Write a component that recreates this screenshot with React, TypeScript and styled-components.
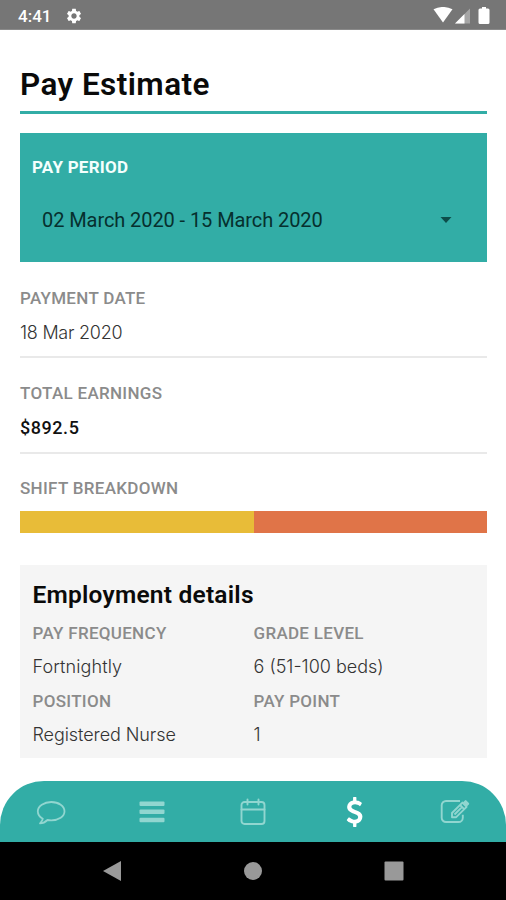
import React from "react";
import styled, { createGlobalStyle, css } from "styled-components";

const TEAL = "#32ada6";

const GlobalStyle = createGlobalStyle`
  * { box-sizing: border-box; }
  body { margin: 0; background: #fff; font-family: Roboto, sans-serif; color: #0a0a0a; }
`;

const Screen = styled.div`
  width: 506px;
  height: 900px;
  display: flex;
  flex-direction: column;
  overflow: hidden;
  background: #fff;
  white-space: nowrap;
`;

const StatusBar = styled.header`
  flex: none;
  height: 30px;
  display: flex;
  align-items: center;
  padding: 2px 15px 0 18px;
  background: #767676;
  border-bottom: 1px solid #8a8a8a;
  color: #fff;
  svg { display: block; }
`;

const Clock = styled.time`
  width: 47px;
  font-size: 17px;
  font-weight: 500;
  line-height: 20px;
`;

const StatusIcons = styled.div`
  margin-left: auto;
  display: flex;
  align-items: center;
`;

const Content = styled.main`
  flex: 1;
  padding: 0 19px 0 20px;
`;

const Title = styled.h1`
  margin: 0;
  height: 84px;
  padding-top: 37px;
  font-size: 31.5px;
  font-weight: 600;
  line-height: 36px;
  letter-spacing: 0.43px;
  border-bottom: 3px solid ${TEAL};
`;

const PeriodCard = styled.section`
  margin-top: 18.5px;
  height: 129.5px;
  padding: 23px 35px 0 12px;
  background: ${TEAL};
`;

const Label = styled.div<{ $light?: boolean }>`
  font-size: 17px;
  font-weight: ${(p) => (p.$light ? 700 : 500)};
  line-height: 22px;
  letter-spacing: ${(p) => (p.$light ? "0.25px" : "0.3px")};
  color: ${(p) => (p.$light ? "#f4fffd" : "#8b8b8b")};
`;

const PeriodSelect = styled.div`
  display: flex;
  align-items: center;
  justify-content: space-between;
  margin-top: 30px;
  padding-left: 10px;
  font-size: 20px;
  line-height: 24px;
  letter-spacing: -0.08px;
  color: #06302e;
`;

const Value = styled.div<{ $spacing?: number; $strong?: boolean }>`
  font-family: Inter, sans-serif;
  font-weight: 300;
  font-size: 18px;
  line-height: 24px;
  color: #333;
  letter-spacing: ${(p) => p.$spacing ?? 0}px;
  ${(p) =>
    p.$strong &&
    css`
      font-family: Roboto, sans-serif;
      font-weight: 500;
      color: #111;
    `}
`;

const Field = styled.section<{ $height: number; $top: number }>`
  height: ${(p) => p.$height}px;
  padding-top: ${(p) => p.$top}px;
  border-bottom: 2px solid #e9e9e9;
  ${Value} { margin-top: 12px; }
`;

const Breakdown = styled.section`
  padding-top: 23px;
`;

const Bar = styled.div`
  display: flex;
  height: 22px;
  margin-top: 12px;
`;

const Segment = styled.div<{ $color: string }>`
  flex: 1;
  background: ${(p) => p.$color};
`;

const Details = styled.section`
  margin-top: 32px;
  height: 193px;
  padding: 15px 12px 0 12.5px;
  background: #f5f5f5;
`;

const Subtitle = styled.h2`
  margin: 0;
  font-size: 24.5px;
  font-weight: 600;
  line-height: 30px;
  letter-spacing: 0.22px;
`;

const DetailGrid = styled.div`
  display: grid;
  grid-template-columns: 221px 1fr;
  grid-auto-rows: 68px;
  margin-top: 12px;
  ${Value} { margin-top: 11px; }
`;

const TabBar = styled.nav`
  flex: none;
  height: 61px;
  display: grid;
  grid-template-columns: repeat(5, 1fr);
  padding-left: 0.85px;
  background: ${TEAL};
  border-radius: 44px 44px 0 0;
`;

const Tab = styled.span<{ $active?: boolean }>`
  display: flex;
  align-items: center;
  justify-content: center;
  color: ${(p) => (p.$active ? "#fff" : "#91d6d0")};
`;

const SystemBar = styled.footer`
  flex: none;
  height: 58px;
  display: flex;
  align-items: center;
  padding: 0 102px;
  justify-content: space-between;
  background: #000;
  color: #999;
  svg { display: block; }
`;

const GearIcon = () => (
  <svg width="18" height="18" viewBox="0 0 24 24" fill="currentColor">
    <path d="M19.14 12.94c.04-.3.06-.61.06-.94 0-.32-.02-.64-.07-.94l2.03-1.58c.18-.14.23-.41.12-.61l-1.92-3.32c-.12-.22-.37-.29-.59-.22l-2.39.96c-.5-.38-1.03-.7-1.62-.94l-.36-2.54c-.04-.24-.24-.41-.48-.41h-3.84c-.24 0-.43.17-.47.41l-.36 2.54c-.59.24-1.13.57-1.62.94l-2.39-.96c-.22-.08-.47 0-.59.22L2.74 8.87c-.12.21-.08.47.12.61l2.03 1.58c-.05.3-.09.63-.09.94s.02.64.07.94l-2.03 1.58c-.18.14-.23.41-.12.61l1.92 3.32c.12.22.37.29.59.22l2.39-.96c.5.38 1.03.7 1.62.94l.36 2.54c.05.24.24.41.48.41h3.84c.24 0 .44-.17.47-.41l.36-2.54c.59-.24 1.13-.56 1.62-.94l2.39.96c.22.08.47 0 .59-.22l1.92-3.32c.12-.22.07-.47-.12-.61l-2.01-1.58zM12 15.6c-1.98 0-3.6-1.62-3.6-3.6s1.62-3.6 3.6-3.6 3.6 1.62 3.6 3.6-1.62 3.6-3.6 3.6z" />
  </svg>
);

const SignalIcons = () => (
  <svg width="58" height="18" viewBox="0 0 58 18" fill="currentColor">
    <path d="M0.5 2.3Q10 -2.4 19.5 2.3L10 15.5Z" />
    <path d="M37 1.5V16.5H22Z" opacity=".35" />
    <path d="M31.5 7V16.5H22Z" />
    <path d="M49 0h4v1.5h2q1.5 0 1.5 1.5v12.5q0 1.5-1.5 1.5h-8q-1.5 0-1.5-1.5V3q0-1.5 1.5-1.5h2Z" />
  </svg>
);

const CommentIcon = () => (
  <svg width="30" height="28" viewBox="0 0 30 28" fill="none" stroke="currentColor" strokeWidth="1.8" strokeLinejoin="round">
    <path d="M15.3 4C8 4 1.8 8 1.8 13.3c0 3 1.7 5.7 5 7.4-.2 2-1.5 3.4-2.8 4.6 3.2 0 5.7-1.5 7.5-3.3 1.2.2 2.5.3 3.8.3 7.5 0 13.2-3.8 13.2-9S22.8 4 15.3 4Z" />
  </svg>
);

const MenuIcon = () => (
  <svg width="26" height="24" viewBox="0 0 26 24" fill="currentColor">
    <rect x="0.5" y="1.5" width="25" height="4.5" rx="1" />
    <rect x="0.5" y="9.6" width="25" height="4.5" rx="1" />
    <rect x="0.5" y="17.8" width="25" height="4.5" rx="1" />
  </svg>
);

const CalendarIcon = () => (
  <svg width="26" height="28" viewBox="0 0 26 28" fill="none" stroke="currentColor" strokeWidth="1.9" strokeLinecap="round">
    <rect x="1.5" y="4" width="23" height="22" rx="3" />
    <path d="M1.5 11.5h23M7.5 1.5v5M18.5 1.5v5" />
  </svg>
);

const DollarIcon = () => (
  <svg width="17.2" height="30" viewBox="0 0 1024 1792" fill="currentColor">
    <path d="M978 1185q0 153-99.5 263.5t-258.5 136.5v175q0 14-9 23t-23 9h-135q-13 0-22.5-9.5t-9.5-22.5v-175q-66-9-127.5-31t-101.5-44.5-74-48-46.5-37.5-17.5-18q-17-21-2-41l103-135q7-10 23-12 15-2 24 9l2 2q113 99 243 125 37 8 74 8 81 0 142.5-43t61.5-122q0-28-15-53t-33.5-42-58.5-37.5-66-32-80-32.5q-39-16-61.5-25t-61.5-26.5-62.5-31-56.5-35.5-53.5-42.5-43.5-49-35.5-58-21-66.5-8.5-78q0-138 98-242t255-134v-180q0-13 9.5-22.5t22.5-9.5h135q14 0 23 9t9 23v176q57 6 110.5 23t87 33.5 63.5 37.5 39 29 15 14q17 18 5 38l-81 146q-8 15-23 16-14 3-27-7-3-3-14.5-12t-39-26.5-58.5-32-74.5-26-85.5-11.5q-95 0-155 43t-60 111q0 26 8.5 48t29.5 41.5 39.5 33 56 31 60.5 27 70 27.5q53 20 81 31.5t76 35 75.5 42.5 62 50 53 63.5 31.5 76.5 13 94z" />
  </svg>
);

const EditIcon = () => (
  <svg width="30" height="28" viewBox="0 0 30 28" fill="none" stroke="currentColor" strokeWidth="1.9" strokeLinejoin="round">
    <path d="M20 3H6A4.3 4.3 0 0 0 1.7 7.3v12.4A4.3 4.3 0 0 0 6 24h12.5a4.3 4.3 0 0 0 4.3-4.3v-3" />
    <path d="M12 15 22.4 4.6l4.2 4.2-10.4 10.4H12ZM20 7l4.2 4.2M14.5 16.5l7.2-7.2" />
    <path d="m22.8 4.5 2.1-2.1q.8-.7 1.5 0l2.5 2.5q.7.8 0 1.5l-2.1 2.1Z" fill="currentColor" stroke="none" />
  </svg>
);

const details = [
  { label: "PAY FREQUENCY", value: "Fortnightly", spacing: 0.1 },
  { label: "GRADE LEVEL", value: "6 (51-100 beds)", spacing: 0 },
  { label: "POSITION", value: "Registered Nurse", spacing: -0.08 },
  { label: "PAY POINT", value: "1", spacing: 0 },
];

export default function App() {
  return (
    <Screen>
      <GlobalStyle />
      <StatusBar>
        <Clock>4:41</Clock>
        <GearIcon />
        <StatusIcons>
          <SignalIcons />
        </StatusIcons>
      </StatusBar>
      <Content>
        <Title>Pay Estimate</Title>
        <PeriodCard>
          <Label $light>PAY PERIOD</Label>
          <PeriodSelect>
            <span>02 March 2020 - 15 March 2020</span>
            <svg width="12" height="6" viewBox="0 0 12 6" fill="#0d4d4a">
              <path d="M0.5 0h11L6 6Z" />
            </svg>
          </PeriodSelect>
        </PeriodCard>
        <Field $height={96} $top={25}>
          <Label>PAYMENT DATE</Label>
          <Value $spacing={-0.25}>18 Mar 2020</Value>
        </Field>
        <Field $height={96} $top={24}>
          <Label>TOTAL EARNINGS</Label>
          <Value $strong $spacing={0.55}>$892.5</Value>
        </Field>
        <Breakdown>
          <Label>SHIFT BREAKDOWN</Label>
          <Bar>
            <Segment $color="#e8bc38" />
            <Segment $color="#e07448" />
          </Bar>
        </Breakdown>
        <Details>
          <Subtitle>Employment details</Subtitle>
          <DetailGrid>
            {details.map((d) => (
              <div key={d.label}>
                <Label>{d.label}</Label>
                <Value $spacing={d.spacing}>{d.value}</Value>
              </div>
            ))}
          </DetailGrid>
        </Details>
      </Content>
      <TabBar>
        <Tab><CommentIcon /></Tab>
        <Tab><MenuIcon /></Tab>
        <Tab><CalendarIcon /></Tab>
        <Tab $active><DollarIcon /></Tab>
        <Tab><EditIcon /></Tab>
      </TabBar>
      <SystemBar>
        <svg width="20" height="22" viewBox="0 0 20 22" fill="currentColor">
          <path d="M1 11 19 1v20Z" />
        </svg>
        <svg width="18" height="18" viewBox="0 0 18 18" fill="currentColor">
          <circle cx="9" cy="9" r="9" />
        </svg>
        <svg width="20" height="20" viewBox="0 0 20 20" fill="currentColor">
          <rect x="0.5" y="0.5" width="19" height="19" rx="1" />
        </svg>
      </SystemBar>
    </Screen>
  );
}
